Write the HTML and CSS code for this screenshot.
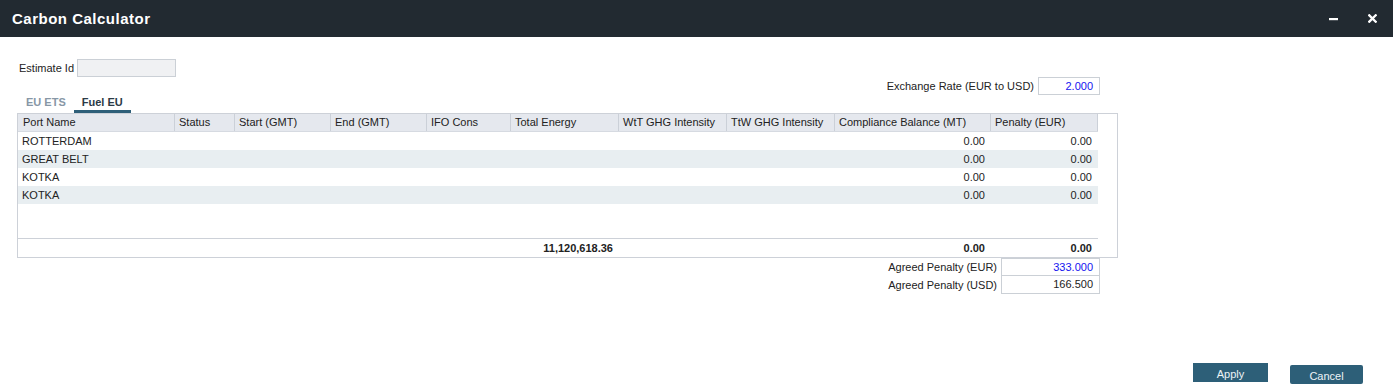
FILE: index.html
```html
<!DOCTYPE html>
<html>
<head>
<meta charset="utf-8">
<title>Carbon Calculator</title>
<link rel="stylesheet" href="styles.css">
</head>
<body>
<div class="dialog">
  <div class="titlebar">
    <div class="title">Carbon Calculator</div>
    <div class="win-actions">
      <svg class="ico-min" width="9" height="3" viewBox="0 0 9 3"><rect x="0" y="0" width="9" height="2.2" fill="#fff"/></svg>
      <svg class="ico-close" width="9" height="9" viewBox="0 0 9 9"><path d="M1.3 1.3 L7.7 7.7 M7.7 1.3 L1.3 7.7" stroke="#fff" stroke-width="2.3" stroke-linecap="square"/></svg>
    </div>
  </div>

  <div class="content">
    <div class="estimate-row">
      <span class="lbl">Estimate Id</span>
      <span class="field field-grey"></span>
    </div>
    <div class="exchange-row">
      <span class="lbl">Exchange Rate (EUR to USD)</span>
      <span class="field field-num blue">2.000</span>
    </div>
    <div class="tabs">
      <div class="tab">EU ETS</div>
      <div class="tab active">Fuel EU</div>
    </div>

    <div class="grid">
      <div class="grid-inner">
        <div class="row head">
          <div class="c c1">Port Name</div>
          <div class="c c2">Status</div>
          <div class="c c3">Start (GMT)</div>
          <div class="c c4">End (GMT)</div>
          <div class="c c5">IFO Cons</div>
          <div class="c c6">Total Energy</div>
          <div class="c c7">WtT GHG Intensity</div>
          <div class="c c8">TtW GHG Intensity</div>
          <div class="c c9">Compliance Balance (MT)</div>
          <div class="c c10">Penalty (EUR)</div>
        </div>
        <div class="body">
          <div class="row">
            <div class="c c1">ROTTERDAM</div><div class="c c2"></div><div class="c c3"></div><div class="c c4"></div><div class="c c5"></div><div class="c c6"></div><div class="c c7"></div><div class="c c8"></div><div class="c c9 num">0.00</div><div class="c c10 num">0.00</div>
          </div>
          <div class="row alt">
            <div class="c c1">GREAT BELT</div><div class="c c2"></div><div class="c c3"></div><div class="c c4"></div><div class="c c5"></div><div class="c c6"></div><div class="c c7"></div><div class="c c8"></div><div class="c c9 num">0.00</div><div class="c c10 num">0.00</div>
          </div>
          <div class="row">
            <div class="c c1">KOTKA</div><div class="c c2"></div><div class="c c3"></div><div class="c c4"></div><div class="c c5"></div><div class="c c6"></div><div class="c c7"></div><div class="c c8"></div><div class="c c9 num">0.00</div><div class="c c10 num">0.00</div>
          </div>
          <div class="row alt">
            <div class="c c1">KOTKA</div><div class="c c2"></div><div class="c c3"></div><div class="c c4"></div><div class="c c5"></div><div class="c c6"></div><div class="c c7"></div><div class="c c8"></div><div class="c c9 num">0.00</div><div class="c c10 num">0.00</div>
          </div>
        </div>
        <div class="row foot">
          <div class="c c1"></div><div class="c c2"></div><div class="c c3"></div><div class="c c4"></div><div class="c c5"></div><div class="c c6 num">11,120,618.36</div><div class="c c7"></div><div class="c c8"></div><div class="c c9 num">0.00</div><div class="c c10 num">0.00</div>
        </div>
      </div>
    </div>

    <div class="agreed">
      <div class="agreed-row">
        <span class="lbl">Agreed Penalty (EUR)</span>
        <span class="field field-wide blue">333.000</span>
      </div>
      <div class="agreed-row">
        <span class="lbl">Agreed Penalty (USD)</span>
        <span class="field field-wide second">166.500</span>
      </div>
    </div>
  </div>

  <div class="buttons">
    <button class="btn btn-apply">Apply</button>
    <button class="btn btn-cancel">Cancel</button>
  </div>
</div>
</body>
</html>
```

FILE: styles.css
```css
html, body {
  margin: 0;
  padding: 0;
  background: #fff;
}
body {
  font-family: "Liberation Sans", Arial, sans-serif;
  font-size: 11px;
  color: #222;
}
.dialog {
  width: 1393px;
  height: 389px;
  display: flex;
  flex-direction: column;
  overflow: hidden;
}
.titlebar {
  height: 37px;
  flex: none;
  background: #222a31;
  display: flex;
  align-items: center;
  justify-content: space-between;
  padding: 0 16px 0 12px;
}
.title {
  color: #fff;
  font-weight: bold;
  font-size: 15px;
  letter-spacing: 0.5px;
}
.win-actions {
  display: flex;
  align-items: center;
  gap: 30px;
}
.ico-min { margin-top: 1px; }
.ico-close { margin-top: 0; }

.content {
  padding: 22px 0 0 17px;
  width: 1101px;
}
.lbl {
  line-height: 18px;
}
.field {
  box-sizing: border-box;
  height: 18px;
  border: 1px solid #cbd0d6;
  background: #fff;
  display: inline-block;
  line-height: 16px;
  text-align: right;
  padding-right: 6px;
}
.blue { color: #1414f0; }
.estimate-row {
  display: flex;
  align-items: center;
  padding-left: 2px;
  gap: 3px;
}
.field-grey {
  width: 99px;
  background: #f0f1f3;
}
.exchange-row {
  display: flex;
  justify-content: flex-end;
  align-items: center;
  gap: 4px;
  padding-right: 18px;
}
.field-num {
  width: 62px;
}
.tabs {
  display: flex;
  height: 18px;
  padding-left: 1px;
}
.tab {
  box-sizing: border-box;
  height: 18px;
  padding: 0 8px;
  font-weight: bold;
  color: #8797a6;
  line-height: 14px;
}
.tab.active {
  color: #2b3a46;
  border-bottom: 3px solid #2e5f79;
}

.grid {
  box-sizing: border-box;
  width: 1101px;
  height: 145px;
  border: 1px solid #cdd1d8;
}
.grid-inner {
  width: 1080px;
  height: 143px;
  display: flex;
  flex-direction: column;
}
.row {
  display: flex;
  height: 18px;
  line-height: 19px;
}
.row.alt { background: #e8eef1; }
.head {
  background: #e5e8ee;
  height: 17px;
  line-height: 17px;
  border-bottom: 1px solid #d6dae1;
}
.head .c {
  border-right: 1px solid #cbd0d8;
  padding-left: 4px;
}
.head .c1 { padding-left: 5px; }
.body {
  flex: 1;
}
.foot {
  border-top: 1px solid #cdd1d8;
  height: 18px;
  font-weight: bold;
}
.c {
  box-sizing: border-box;
  flex: none;
  white-space: nowrap;
  overflow: hidden;
  padding-left: 4px;
}
.c.num {
  text-align: right;
  padding-right: 6px;
}
.c1 { width: 157px; }
.c2 { width: 60px; }
.c3 { width: 96px; }
.c4 { width: 96px; }
.c5 { width: 84px; }
.c6 { width: 108px; }
.c7 { width: 108px; }
.c8 { width: 108px; }
.c9 { width: 156px; }
.c10 { width: 107px; }

.agreed {
  display: flex;
  flex-direction: column;
  align-items: flex-end;
  padding-right: 18px;
}
.agreed-row {
  display: flex;
  align-items: center;
  gap: 4px;
}
.field-wide {
  width: 99px;
  color: #222;
}
.field-wide.blue { color: #1414f0; }
.field-wide.second { border-top: none; height: 18px; line-height: 17px; }

.buttons {
  margin-top: auto;
  display: flex;
  justify-content: flex-end;
  align-items: flex-start;
  gap: 22px;
  padding: 0 30px 5px 0;
}
.btn {
  font-family: "Liberation Sans", Arial, sans-serif;
  font-size: 11px;
  color: #eef3f6;
  background: #2d5f78;
  border: none;
  height: 19px;
  padding: 3px 0 0 0;
  line-height: 16px;
  cursor: pointer;
}
.btn-apply {
  width: 75px;
  margin-bottom: 1px;
}
.btn-cancel {
  width: 73px;
  border-radius: 2px;
  margin-top: 2px;
}
```
